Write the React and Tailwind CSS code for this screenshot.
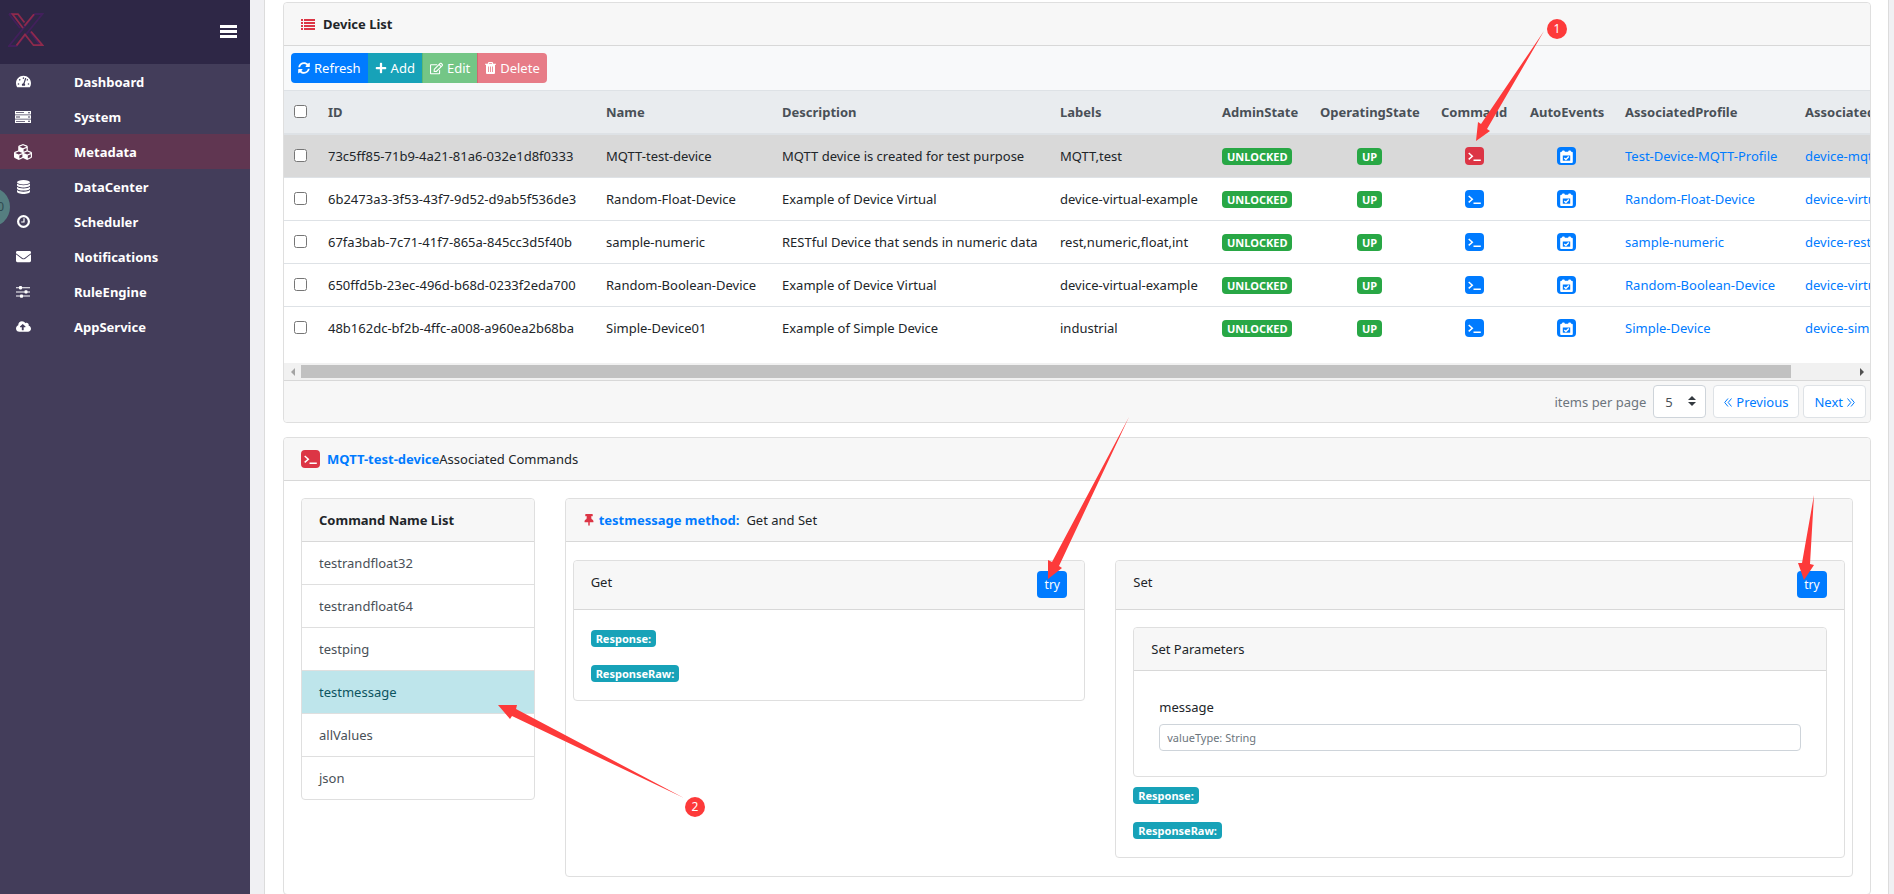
import { useState } from 'react'
import { FaCubes, FaEnvelope, FaThumbtack, FaRegEdit, FaSyncAlt, FaPlus, FaTachometerAlt, FaCloudUploadAlt } from 'react-icons/fa'

function ServerIcon() {
  return (
    <svg width="16" height="12" viewBox="0 0 16 12" fill="currentColor" aria-hidden="true">
      <path fillRule="evenodd" d="M0 0h16v3.400H0zM1 1.300h8v.800H1zM13 1.200h2v1h-2zM0 4.300h16v3.400H0zM1 5.600h4v.800H1zM13 5.500h2v1h-2zM0 8.600h16V12H0zM1 9.900h9v.800H1zM13 9.800h2v1h-2z" />
    </svg>
  )
}

function DatabaseIcon() {
  return (
    <svg width="13" height="14" viewBox="0 0 13 14" fill="currentColor" aria-hidden="true">
      <ellipse cx="6.5" cy="2.2" rx="6.5" ry="2.2" />
      <path d="M0 3.600c1.200 1.300 3.600 1.700 6.500 1.700s5.300-.4 6.500-1.700v1.600c0 1.200-2.900 2.200-6.500 2.200S0 6.400 0 5.200z" />
      <path d="M0 6.800c1.200 1.300 3.600 1.700 6.500 1.700s5.300-.4 6.500-1.700v1.600c0 1.200-2.900 2.200-6.500 2.200S0 9.600 0 8.400z" />
      <path d="M0 10c1.200 1.300 3.600 1.700 6.500 1.700s5.300-.4 6.500-1.700v1.800c0 1.200-2.900 2.200-6.500 2.200S0 13 0 11.800z" />
    </svg>
  )
}

function ClockIcon() {
  return (
    <svg width="13" height="13" viewBox="0 0 13 13" fill="none" stroke="currentColor" aria-hidden="true">
      <circle cx="6.500" cy="6.500" r="5.400" strokeWidth="2.200" />
      <path d="M7 3.200v3.800H4.200" strokeWidth="1.200" />
    </svg>
  )
}

function SlidersIcon() {
  return (
    <svg width="14" height="12" viewBox="0 0 14 12" fill="currentColor" aria-hidden="true">
      <path d="M0 1.200h14v1H0zM0 5.400h14v1H0zM0 9.600h14v1H0z" />
      <rect x="3" y="0" width="3" height="3.400" rx=".8" />
      <rect x="8.500" y="4.200" width="3" height="3.400" rx=".8" />
      <rect x="4" y="8.400" width="3" height="3.400" rx=".8" />
    </svg>
  )
}

function ListIcon() {
  return (
    <svg width="14" height="11" viewBox="0 0 14 11" fill="currentColor" aria-hidden="true">
      <path d="M0 0h2v2H0zM3 0h11v2H3zM0 3h2v2H0zM3 3h11v2H3zM0 6h2v2H0zM3 6h11v2H3zM0 9h2v2H0zM3 9h11v2H3z" />
    </svg>
  )
}

function TrashIcon() {
  return (
    <svg width="11" height="12" viewBox="0 0 11 12" fill="currentColor" aria-hidden="true">
      <path fillRule="evenodd" d="M3.500 0h4l.8 1.700H11v1.100H10v8.200a1 1 0 0 1-1 1H2a1 1 0 0 1-1-1V2.800H0V1.700h2.700zM4.200.900l-.4.800h3.400l-.4-.8zM3 4.500v5.500h.8V4.500zM5.100 4.500v5.500h.8V4.500zM7.200 4.500v5.500h.8V4.500z" />
    </svg>
  )
}

function Chevrons({ flip }) {
  return (
    <svg width="8" height="9" viewBox="0 0 8 9" fill="none" stroke="currentColor" className={`mt-[2px] ${flip ? 'rotate-180' : ''}`} aria-hidden="true">
      <path d="M4 .500l-3.300 4 3.300 4M7.500.500l-3.300 4 3.300 4" />
    </svg>
  )
}

function TerminalBadge({ active }) {
  return (
    <span className={`flex h-[18px] w-[19px] items-center justify-center rounded text-white ${active ? 'bg-[#dc3545]' : 'bg-[#007bff]'}`}>
      <svg width="13" height="9" viewBox="0 0 13 9" fill="none" stroke="currentColor" strokeWidth="1.500" aria-hidden="true">
        <path d="M.700 1l3.600 3.200-3.600 3.200M5.500 8.200h7.300" />
      </svg>
    </span>
  )
}

function CalendarBadge() {
  return (
    <span className="flex h-[18px] w-[19px] items-center justify-center rounded bg-[#007bff] text-white">
      <svg width="13" height="13" viewBox="0 0 13 13" aria-hidden="true">
        <path fill="currentColor" d="M2 1.500a1 1 0 0 1 1-1h.8a1 1 0 0 1 1 1v.300h3.400v-.3a1 1 0 0 1 1-1h.8a1 1 0 0 1 1 1v.3h.8a1 1 0 0 1 1 1V12a1 1 0 0 1-1 1H1.200a1 1 0 0 1-1-1V2.800a1 1 0 0 1 1-1H2z" />
        <path fill="#007bff" d="M2.800 5.500h7.400v5.200H2.800z" />
        <path fill="none" stroke="currentColor" strokeWidth="1.400" d="M4.300 8l1.600 1.500 2.900-3.100" />
      </svg>
    </span>
  )
}

function Logo() {
  return (
    <svg width="36" height="34" viewBox="0 0 36 34" fill="none" strokeWidth="1.800" aria-hidden="true">
      <path stroke="#42205c" d="M27 1h7.500L8.500 33H1L27 1zM1 1h4M1 1l11 14M22 19l10 13" />
      <path stroke="#8f2a4c" d="M15 15L4.500 1.200H10l6.500 8.300M16.500 12.800L26 1.200M8.500 32.500L17 21.500l8.500 10.700h9L23 18.500" />
    </svg>
  )
}

const menu = [
  { name: 'Dashboard', icon: <FaTachometerAlt size={15} /> },
  { name: 'System', icon: <ServerIcon /> },
  { name: 'Metadata', icon: <FaCubes size={18} /> },
  { name: 'DataCenter', icon: <DatabaseIcon /> },
  { name: 'Scheduler', icon: <ClockIcon /> },
  { name: 'Notifications', icon: <FaEnvelope size={15} /> },
  { name: 'RuleEngine', icon: <SlidersIcon /> },
  { name: 'AppService', icon: <FaCloudUploadAlt size={15} /> },
]

const devices = [
  { id: '73c5ff85-71b9-4a21-81a6-032e1d8f0333', name: 'MQTT-test-device', desc: 'MQTT device is created for test purpose', labels: 'MQTT,test', profile: 'Test-Device-MQTT-Profile', service: 'device-mqtt' },
  { id: '6b2473a3-3f53-43f7-9d52-d9ab5f536de3', name: 'Random-Float-Device', desc: 'Example of Device Virtual', labels: 'device-virtual-example', profile: 'Random-Float-Device', service: 'device-virtual' },
  { id: '67fa3bab-7c71-41f7-865a-845cc3d5f40b', name: 'sample-numeric', desc: 'RESTful Device that sends in numeric data', labels: 'rest,numeric,float,int', profile: 'sample-numeric', service: 'device-rest' },
  { id: '650ffd5b-23ec-496d-b68d-0233f2eda700', name: 'Random-Boolean-Device', desc: 'Example of Device Virtual', labels: 'device-virtual-example', profile: 'Random-Boolean-Device', service: 'device-virtual' },
  { id: '48b162dc-bf2b-4ffc-a008-a960ea2b68ba', name: 'Simple-Device01', desc: 'Example of Simple Device', labels: 'industrial', profile: 'Simple-Device', service: 'device-simple' },
]

const commands = ['testrandfloat32', 'testrandfloat64', 'testping', 'testmessage', 'allValues', 'json']

const arrows = [
  '1544,31 1481,124 1478,122 1476,141 1490,131 1487,129',
  '684,798 516,709 517,705 498,705 510,719 512,716',
  '1129,417 1052,562 1048,560 1048,579 1062,568 1059,566',
  '1814,495 1802,563 1798,563 1804,580 1814,565 1810,564',
]

function Sidebar() {
  return (
    <aside className="w-[250px] shrink-0 bg-[#433d5a] text-white">
      <div className="flex h-16 items-start justify-between bg-[#2e2746] pt-[13px] pr-[13px] pl-2">
        <Logo />
        <button type="button" aria-label="Toggle menu" className="mt-3 flex w-[17px] flex-col gap-[2px]">
          <span className="h-[3px] w-full bg-white" />
          <span className="h-[3px] w-full bg-white" />
          <span className="h-[3px] w-full bg-white" />
        </button>
      </div>
      <nav>
        {menu.map(item => (
          <a
            key={item.name}
            href="#"
            className={`flex h-[35px] items-center pl-3 text-[13px] font-bold ${item.name === 'Metadata' ? 'bg-[#603651]' : ''}`}
          >
            <span className="mr-10 flex w-[22px] justify-center">{item.icon}</span>
            {item.name}
          </a>
        ))}
      </nav>
    </aside>
  )
}

function Card({ className = '', children }) {
  return <section className={`rounded border border-[#dfdfdf] bg-white ${className}`}>{children}</section>
}

function CardHeader({ className = 'h-[43px] items-center', children }) {
  return <div className={`flex rounded-t border-b border-[#d8d8d8] bg-[#f7f7f7] px-[17px] ${className}`}>{children}</div>
}

function Badge({ className, children }) {
  return (
    <span className={`inline-flex h-[17px] items-center rounded px-[5px] text-[11px] leading-none font-bold text-white ${className}`}>
      {children}
    </span>
  )
}

function DeviceTable({ selected }) {
  return (
    <table className="mb-[13px] w-[1650px] table-fixed border-separate border-spacing-0 text-left whitespace-nowrap">
      <colgroup>
        <col className="w-[33px]" />
        <col className="w-[278px]" />
        <col className="w-[176px]" />
        <col className="w-[278px]" />
        <col className="w-[162px]" />
        <col className="w-[98px]" />
        <col className="w-[121px]" />
        <col className="w-[89px]" />
        <col className="w-[95px]" />
        <col className="w-[180px]" />
        <col className="w-[140px]" />
      </colgroup>
      <thead className="bg-[#e9ecef] text-[#495057] [&_th]:h-[45px] [&_th]:border-t [&_th]:border-b-2 [&_th]:border-[#dee2e6] [&_th]:px-[11px]">
        <tr>
          <th><input type="checkbox" aria-label="Select all" className="mb-[2px] -ml-px block size-[13px]" /></th>
          <th>ID</th>
          <th>Name</th>
          <th>Description</th>
          <th>Labels</th>
          <th>AdminState</th>
          <th className="text-center">OperatingState</th>
          <th>Command</th>
          <th>AutoEvents</th>
          <th>AssociatedProfile</th>
          <th>AssociatedService</th>
        </tr>
      </thead>
      <tbody className="[&_td]:h-[43px] [&_td]:border-b [&_td]:border-[#dee2e6] [&_td]:px-[11px] [&_tr:last-child_td]:border-white">
        {devices.map(d => (
          <tr key={d.id} className={d.id === selected ? 'bg-[#d9d9d9]' : ''}>
            <td><input type="checkbox" aria-label={d.name} className="mb-[2px] -ml-px block size-[13px]" /></td>
            <td>{d.id}</td>
            <td>{d.name}</td>
            <td>{d.desc}</td>
            <td>{d.labels}</td>
            <td><Badge className="bg-[#28a745]">UNLOCKED</Badge></td>
            <td className="text-center"><Badge className="bg-[#28a745]">UP</Badge></td>
            <td>
              <button type="button" aria-label="Commands" className="mx-auto block"><TerminalBadge active={d.id === selected} /></button>
            </td>
            <td>
              <button type="button" aria-label="Auto events" className="mx-auto block"><CalendarBadge /></button>
            </td>
            <td><a href="#" className="text-[#007bff]">{d.profile}</a></td>
            <td><a href="#" className="text-[#007bff]">{d.service}</a></td>
          </tr>
        ))}
      </tbody>
    </table>
  )
}

function TryHeader({ title }) {
  return (
    <CardHeader className="h-[49px] items-start justify-between">
      <span className="pt-[11px]">{title}</span>
      <button type="button" className="mt-[10px] h-[27px] w-[30px] rounded-sm bg-[#007bff] text-xs text-white">try</button>
    </CardHeader>
  )
}

function Responses() {
  return (
    <div className="flex flex-col items-start gap-[18px]">
      <Badge className="bg-[#17a2b8]">Response:</Badge>
      <Badge className="bg-[#17a2b8]">ResponseRaw:</Badge>
    </div>
  )
}

export default function App() {
  const [command, setCommand] = useState('testmessage')

  return (
    <div className="relative flex h-screen overflow-hidden bg-[#f0f0f3] font-['Noto_Sans','Open_Sans',sans-serif] text-[13px] leading-5 text-[#212529]">
      <Sidebar />

      <main className="mr-[5px] ml-[14px] min-w-0 flex-1 border-x border-[#dcdcdc] bg-white pt-[2px] pr-[17px] pl-[18px]">
        {/* Device list */}
        <Card className="mb-[14px]">
          <CardHeader>
            <span className="mr-2 text-[#dc3545]"><ListIcon /></span>
            <h2 className="font-bold">Device List</h2>
          </CardHeader>
          <div className="flex h-11 items-center bg-[#f8f9fa] px-[7px] text-white">
            <button type="button" className="flex h-[30px] items-center gap-1 rounded-l bg-[#007bff] px-[7px]"><FaSyncAlt size={12} />Refresh</button>
            <button type="button" className="flex h-[30px] items-center gap-1 bg-[#17a2b8] px-[7px]"><FaPlus size={12} />Add</button>
            <button type="button" disabled className="flex h-[30px] items-center gap-1 border-l border-[#5cb873] bg-[#74c686] px-[7px]"><FaRegEdit size={13} />Edit</button>
            <button type="button" disabled className="flex h-[30px] items-center gap-1 rounded-r border-l border-[#d06670] bg-[#e77c87] px-[7px]"><TrashIcon />Delete</button>
          </div>

          <div className="overflow-hidden">
            <DeviceTable selected="73c5ff85-71b9-4a21-81a6-032e1d8f0333" />
          </div>

          {/* Horizontal scroll bar */}
          <div className="flex h-[17px] items-center bg-[#f1f1f1]">
            <span className="flex w-[17px] justify-center text-[#a3a3a3]">
              <svg width="4" height="8" viewBox="0 0 4 8" fill="currentColor" aria-hidden="true"><path d="M4 0v8L0 4z" /></svg>
            </span>
            <div className="flex-1">
              <div className="h-[13px] w-[96%] bg-[#c1c1c1]" />
            </div>
            <span className="flex w-[17px] justify-center text-[#505050]">
              <svg width="4" height="8" viewBox="0 0 4 8" fill="currentColor" aria-hidden="true"><path d="M0 0v8l4-4z" /></svg>
            </span>
          </div>

          <div className="flex h-[42px] items-center justify-end rounded-b border-t border-[#d8d8d8] bg-[#f7f7f7] pr-1">
            <label htmlFor="page-size" className="mr-[7px] text-[#6c757d]">items per page</label>
            <div className="relative mr-[7px]">
              <select id="page-size" defaultValue="5" className="h-[33px] w-[53px] appearance-none rounded border border-[#ced4da] bg-white pl-[11px] text-[#495057]">
                <option>5</option>
                <option>10</option>
                <option>15</option>
              </select>
              <svg width="8" height="10" viewBox="0 0 8 10" fill="#343a40" className="pointer-events-none absolute top-[11px] right-[10px]" aria-hidden="true">
                <path d="M4 0l4 4H0zM4 10l4-4H0z" />
              </svg>
            </div>
            <button type="button" className="mr-1 flex h-[33px] items-center gap-1 rounded border border-[#dee2e6] bg-white px-[10px] text-[#007bff]"><Chevrons />Previous</button>
            <button type="button" className="flex h-[33px] items-center gap-1 rounded border border-[#dee2e6] bg-white px-[10px] text-[#007bff]">Next<Chevrons flip /></button>
          </div>
        </Card>

        {/* Commands of the selected device */}
        <Card>
          <CardHeader>
            <TerminalBadge active />
            <h2 className="ml-[7px]"><b className="text-[#007bff]">MQTT-test-device</b>Associated Commands</h2>
          </CardHeader>
          <div className="grid grid-cols-12 items-start px-[2px] py-[17px]">
            <div className="col-span-2 px-[15px]">
              <Card>
                <CardHeader><h3 className="font-bold">Command Name List</h3></CardHeader>
                <ul>
                  {commands.map(c => (
                    <li key={c} className="border-b border-[#dfdfdf] last:border-b-0">
                      <button
                        type="button"
                        onClick={() => setCommand(c)}
                        className={`block h-[42px] w-full px-[17px] text-left ${c === command ? 'bg-[#bee5eb] text-[#0c5460]' : 'text-[#495057]'}`}
                      >
                        {c}
                      </button>
                    </li>
                  ))}
                </ul>
              </Card>
            </div>

            <div className="col-span-10 px-[15px]">
              <Card>
                <CardHeader>
                  <FaThumbtack size={12} className="text-[#dc3545]" />
                  <h3 className="ml-1 font-bold text-[#007bff]">{command} method:</h3>
                  <span className="ml-[7px]">Get and Set</span>
                </CardHeader>
                <div className="-mx-2 grid grid-cols-12 items-start py-[18px]">
                  <div className="col-span-5 px-[15px]">
                    <Card>
                      <TryHeader title="Get" />
                      <div className="px-[17px] pt-5 pb-[18px]"><Responses /></div>
                    </Card>
                  </div>
                  <div className="col-span-7 px-[15px]">
                    <Card>
                      <TryHeader title="Set" />
                      <div className="px-[17px] pt-[17px] pb-[18px]">
                        <Card className="mb-[10px]">
                          <CardHeader>Set Parameters</CardHeader>
                          <div className="px-[25px] pt-[26px] pb-[25px]">
                            <label htmlFor="message" className="mb-[7px] block">message</label>
                            <input id="message" type="text" placeholder="valueType: String" className="block h-[27px] w-full rounded-sm border border-[#ced4da] px-[7px] text-[11px] placeholder:text-[#6c757d]" />
                          </div>
                        </Card>
                        <Responses />
                      </div>
                    </Card>
                  </div>
                </div>
              </Card>
            </div>
          </div>
        </Card>
      </main>

      {/* Floating handle on the left edge */}
      <div className="absolute top-[187px] -left-[30px] flex size-10 items-center justify-end rounded-full bg-[#557e80] pr-[6px] text-xs text-[#2f4a50]">0</div>

      {/* Guide arrows with their step numbers */}
      <svg width="1894" height="894" viewBox="0 0 1894 894" fill="#fd3a3a" className="pointer-events-none absolute top-0 left-0" aria-hidden="true">
        {arrows.map(points => <polygon key={points} points={points} />)}
      </svg>
      <span className="absolute top-[19px] left-[1547px] flex size-5 items-center justify-center rounded-full bg-[#fd3a3a] text-xs text-white">1</span>
      <span className="absolute top-[797px] left-[685px] flex size-5 items-center justify-center rounded-full bg-[#fd3a3a] text-xs text-white">2</span>
    </div>
  )
}
